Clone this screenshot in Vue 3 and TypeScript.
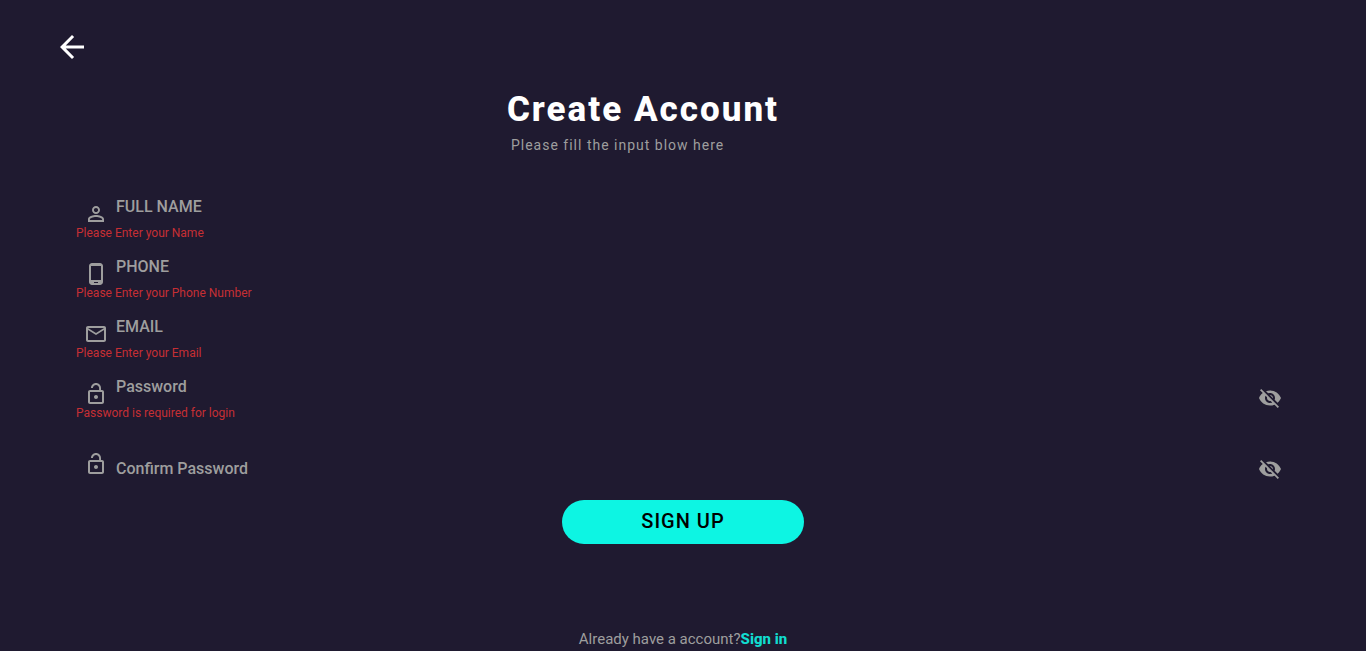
<script setup lang="ts">
import { reactive } from 'vue'

interface Field {
  id: string
  label: string
  type: string
  icon: string
  error?: string
  secret?: boolean
}

const icons: Record<string, string> = {
  person:
    'M12 5.9c1.16 0 2.1.94 2.1 2.1s-.94 2.1-2.1 2.1S9.9 9.16 9.9 8s.94-2.1 2.1-2.1m0 9c2.97 0 6.1 1.46 6.1 2.1v1.1H5.9V17c0-.64 3.13-2.1 6.1-2.1M12 4C9.79 4 8 5.79 8 8s1.79 4 4 4 4-1.79 4-4-1.79-4-4-4zm0 9c-2.67 0-8 1.34-8 4v3h16v-3c0-2.66-5.33-4-8-4z',
  phone:
    'M16 1H8C6.34 1 5 2.34 5 4v16c0 1.66 1.34 3 3 3h8c1.66 0 3-1.34 3-3V4c0-1.66-1.34-3-3-3zm1 17H7V4h10v14zm-3 3h-4v-1h4v1z',
  mail:
    'M22 6c0-1.1-.9-2-2-2H4c-1.1 0-2 .9-2 2v12c0 1.1.9 2 2 2h16c1.1 0 2-.9 2-2V6zm-2 0l-8 5-8-5h16zm0 12H4V8l8 5 8-5v10z',
  lock:
    'M12 17c1.1 0 2-.9 2-2s-.9-2-2-2-2 .9-2 2 .9 2 2 2zm6-9h-1V6c0-2.76-2.24-5-5-5S7 3.24 7 6h1.9c0-1.71 1.39-3.1 3.1-3.1 1.71 0 3.1 1.39 3.1 3.1v2H6c-1.1 0-2 .9-2 2v10c0 1.1.9 2 2 2h12c1.1 0 2-.9 2-2V10c0-1.1-.9-2-2-2zm0 12H6V10h12v10z',
}

const fields: Field[] = [
  { id: 'name', label: 'FULL NAME', type: 'text', icon: 'person', error: 'Please Enter your Name' },
  { id: 'phone', label: 'PHONE', type: 'tel', icon: 'phone', error: 'Please Enter your Phone Number' },
  { id: 'email', label: 'EMAIL', type: 'email', icon: 'mail', error: 'Please Enter your Email' },
  { id: 'password', label: 'Password', type: 'password', icon: 'lock', error: 'Password is required for login', secret: true },
  { id: 'confirm', label: 'Confirm Password', type: 'password', icon: 'lock', secret: true },
]

const values = reactive<Record<string, string>>({ name: '', phone: '', email: '', password: '', confirm: '' })
const shown = reactive<Record<string, boolean>>({})
</script>

<template>
  <main class="page">
    <button class="back" type="button" aria-label="Back">
      <svg viewBox="4 4 16 16" width="24" height="24">
        <path d="M20 11H7.83l5.59-5.59L12 4l-8 8 8 8 1.41-1.41L7.83 13H20v-2z" />
      </svg>
    </button>

    <header class="heading">
      <div>
        <h1>Create Account</h1>
        <p>Please fill the input blow here</p>
      </div>
    </header>

    <form class="form" novalidate @submit.prevent>
      <div v-for="f in fields" :key="f.id" class="field" :class="{ plain: !f.error }">
        <div class="body">
          <div class="line">
            <svg class="icon" viewBox="0 0 24 24" width="24" height="24" aria-hidden="true">
              <path :d="icons[f.icon]" />
            </svg>
            <label :for="f.id">{{ f.label }}</label>
            <input :id="f.id" v-model="values[f.id]" :type="shown[f.id] ? 'text' : f.type" />
          </div>
          <p v-if="f.error" class="error">{{ f.error }}</p>
        </div>
        <button
          v-if="f.secret"
          class="eye"
          type="button"
          aria-label="Toggle visibility"
          @click="shown[f.id] = !shown[f.id]"
        >
          <svg viewBox="0 0 24 24" width="24" height="24">
            <path
              d="M12 7c2.76 0 5 2.24 5 5 0 .65-.13 1.26-.36 1.83l2.92 2.92c1.51-1.26 2.7-2.89 3.43-4.75-1.73-4.39-6-7.5-11-7.5-1.4 0-2.74.25-3.98.7l2.16 2.16C10.74 7.13 11.35 7 12 7zM2 4.27l2.28 2.28.46.46C3.08 8.3 1.78 10.02 1 12c1.73 4.39 6 7.5 11 7.5 1.55 0 3.03-.3 4.38-.84l.42.42L19.73 22 21 20.73 3.27 3 2 4.27zM7.53 9.8l1.55 1.55c-.05.21-.08.43-.08.65 0 1.66 1.34 3 3 3 .22 0 .44-.03.65-.08l1.55 1.55c-.67.33-1.41.53-2.2.53-2.76 0-5-2.24-5-5 0-.79.2-1.53.53-2.2zm4.31-.78l3.15 3.15.02-.16c0-1.66-1.34-3-3-3l-.17.01z"
            />
          </svg>
        </button>
      </div>
      <button class="submit" type="submit">SIGN UP</button>
    </form>

    <p class="footer">Already have a account?<a href="#">Sign in</a></p>
  </main>
</template>

<style>
body {
  margin: 0;
  background: #1f1a30;
}
</style>

<style scoped>
.page {
  box-sizing: border-box;
  display: flex;
  flex-direction: column;
  min-height: 100vh;
  padding-top: 35px;
  background: #1f1a30;
  color: #9e9e9e;
  font-family: Roboto, sans-serif;
}

h1,
p {
  margin: 0;
}

button {
  padding: 0;
  border: 0;
  background: none;
  color: inherit;
  font-family: inherit;
  cursor: pointer;
}

svg {
  display: block;
  fill: currentColor;
}

.back {
  align-self: flex-start;
  margin-left: 60px;
  color: #fff;
}

.heading {
  display: flex;
  justify-content: center;
  margin-top: 29px;
  padding-right: 80px;
}

h1 {
  color: #fff;
  font-size: 35px;
  font-weight: 800;
  line-height: 44px;
  letter-spacing: 2px;
}

.heading p {
  margin-top: 4px;
  padding-left: 4px;
  font-size: 14px;
  line-height: 18px;
  letter-spacing: 1px;
}

.form {
  display: flex;
  flex-direction: column;
  gap: 16px;
  margin-top: 42px;
  padding: 0 76px;
}

.field {
  display: flex;
  align-items: center;
  height: 44px;
}

.body {
  flex: 1;
}

.line {
  display: flex;
  height: 30px;
}

.icon {
  align-self: flex-end;
  margin: 0 8px;
}

label {
  font-size: 16px;
  font-weight: 500;
  line-height: 22px;
}

input {
  flex: 1;
  min-width: 0;
  padding: 0 8px;
  border: 0;
  outline: 0;
  background: transparent;
  color: #fff;
  font: 16px Roboto, sans-serif;
}

.error {
  color: #c62f34;
  font-size: 12px;
  line-height: 14px;
}

.eye {
  margin-right: 8px;
}

.plain {
  margin-top: 11px;
}

.plain .body {
  align-self: flex-start;
}

.plain label {
  line-height: 44px;
}

.plain .icon {
  align-self: flex-start;
  margin-top: 5px;
}

.submit {
  align-self: center;
  width: 242px;
  height: 44px;
  margin-top: -7px;
  padding-bottom: 2px;
  border-radius: 22px;
  background: #0df5e3;
  color: #000;
  font-size: 20px;
  font-weight: 500;
  letter-spacing: 1px;
}

.footer {
  margin-top: auto;
  padding-top: 24px;
  padding-bottom: 3px;
  font-size: 15px;
  line-height: 18px;
  text-align: center;
}

.footer a {
  color: #11dccf;
  font-weight: 800;
  text-decoration: none;
}
</style>
